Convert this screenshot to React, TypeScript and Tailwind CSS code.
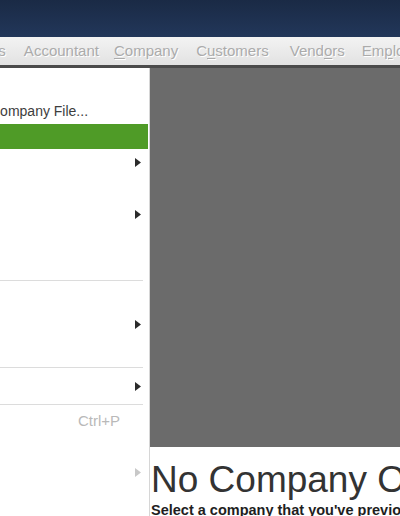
import React from 'react';

const font = { fontFamily: '"Liberation Sans", Arial, sans-serif' };

function Arrow({ faint }: { faint?: boolean }) {
  return (
    <svg width="6" height="9" viewBox="0 0 6 9" className="ml-auto mr-[8px]">
      <path d="M0 0 L6 4.5 L0 9 Z" fill={faint ? '#c8c8c8' : '#2b2b2b'} />
    </svg>
  );
}

function Sep() {
  return <div className="h-px bg-[#dcdcdc] mr-[6px]" />;
}

function MenuItem({ label, u, ml }: { label: string; u?: number; ml: string }) {
  return (
    <span className={`${ml} whitespace-nowrap`}>
      {label.split('').map((ch, i) => (
        <span key={i} className={i === u ? 'underline underline-offset-2' : ''}>
          {ch}
        </span>
      ))}
    </span>
  );
}

export default function App() {
  return (
    <div className="w-[400px] h-[516px] overflow-hidden flex flex-col bg-white" style={font}>
      {/* title bar */}
      <div className="h-[37px] shrink-0 bg-gradient-to-b from-[#1a2a45] to-[#22375a]" />

      {/* menu bar (disabled items) */}
      <div className="h-[28px] shrink-0 flex items-center bg-gradient-to-b from-[#f3f3f3] to-[#e2e2e2] text-[15px] text-[#ababab] [text-shadow:1px_1px_0_#ffffff] overflow-hidden">
        <MenuItem label="Lists" ml="ml-[-25px]" />
        <MenuItem label="Accountant" ml="ml-[18px]" />
        <MenuItem label="Company" u={0} ml="ml-[15px]" />
        <MenuItem label="Customers" u={1} ml="ml-[18px]" />
        <MenuItem label="Vendors" u={4} ml="ml-[21px]" />
        <MenuItem label="Employees" u={2} ml="ml-[17px]" />
      </div>
      <div className="h-[3px] shrink-0 bg-[#4b4b4b]" />

      <div className="flex flex-1 min-h-0">
        {/* file menu dropdown */}
        <div className="w-[150px] shrink-0 border-r border-[#d6d6d6] flex flex-col text-[14px] text-[#3d3d3d] overflow-hidden">
          <div className="h-[31px]" />
          <div className="h-[25px] flex items-center whitespace-nowrap">
            <span className="ml-[-10px]">Company File...</span>
          </div>
          <div className="h-[25px] bg-[#4f9b27] mr-px" />
          <div className="h-[26px] flex items-center"><Arrow /></div>
          <div className="h-[26px]" />
          <div className="h-[26px] flex items-center"><Arrow /></div>
          <div className="h-[53px]" />
          <Sep />
          <div className="h-[86px] flex items-center"><Arrow /></div>
          <Sep />
          <div className="h-[36px] flex items-center"><Arrow /></div>
          <Sep />
          <div className="h-[32px] flex items-center">
            <span className="ml-[78px] text-[15px] text-[#b9b9b9]">Ctrl+P</span>
          </div>
          <div className="h-[70px] flex items-center"><Arrow faint /></div>
        </div>

        {/* main area */}
        <div className="flex-1 min-w-0 flex flex-col">
          <div className="h-[379px] shrink-0 bg-[#6b6b6b]" />
          <div className="flex-1 pt-[14px] pl-px overflow-hidden whitespace-nowrap">
            <div className="text-[37px] leading-[37px] text-[#333333]">No Company Open</div>
            <div className="mt-[4px] text-[14.5px] leading-[17px] font-bold text-[#1e1e1e]">
              Select a company that you've previously opened and click Open
            </div>
          </div>
        </div>
      </div>
    </div>
  );
}
